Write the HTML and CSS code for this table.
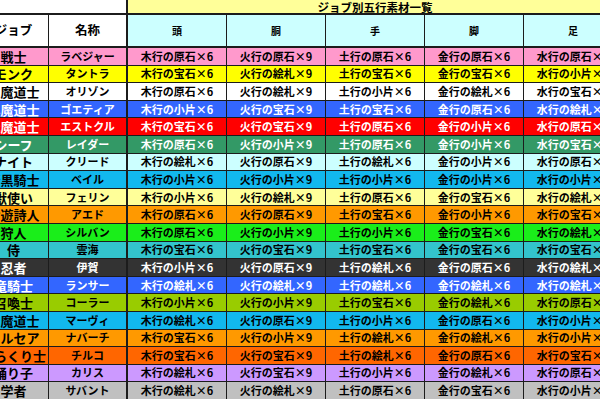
FILE: index.html
```html
<!DOCTYPE html>
<html lang="ja">
<head>
<meta charset="utf-8">
<title>ジョブ別五行素材一覧</title>
<link rel="stylesheet" href="styles.css">
</head>
<body>
<div class="sheet">
  <div class="grid">
    <div class="corner"></div>
    <div class="title first">ジョブ別五行素材一覧</div>

    <div class="hd hd-big">ジョブ</div>
    <div class="hd hd-big">名称</div>
    <div class="hd hd-part first">頭</div>
    <div class="hd hd-part">胴</div>
    <div class="hd hd-part">手</div>
    <div class="hd hd-part">脚</div>
    <div class="hd hd-part">足</div>

    <div class="row c-pink"><div class="job">戦士</div><div class="name">ラベジャー</div><div class="mat first">木行の原石×6</div><div class="mat">火行の原石×9</div><div class="mat">土行の原石×6</div><div class="mat">金行の原石×6</div><div class="mat">水行の原石×6</div></div>
    <div class="row c-yellow"><div class="job">モンク</div><div class="name">タントラ</div><div class="mat first">木行の宝石×6</div><div class="mat">火行の絵札×9</div><div class="mat">土行の宝石×6</div><div class="mat">金行の宝石×6</div><div class="mat">水行の小片×6</div></div>
    <div class="row c-white"><div class="job">白魔道士</div><div class="name">オリゾン</div><div class="mat first">木行の原石×6</div><div class="mat">火行の絵札×9</div><div class="mat">土行の小片×6</div><div class="mat">金行の絵札×6</div><div class="mat">水行の宝石×6</div></div>
    <div class="row c-blue"><div class="job">黒魔道士</div><div class="name">ゴエティア</div><div class="mat first">木行の小片×6</div><div class="mat">火行の宝石×9</div><div class="mat">土行の宝石×6</div><div class="mat">金行の原石×6</div><div class="mat">水行の絵札×6</div></div>
    <div class="row c-red"><div class="job">赤魔道士</div><div class="name">エストクル</div><div class="mat first">木行の宝石×6</div><div class="mat">火行の宝石×9</div><div class="mat">土行の原石×6</div><div class="mat">金行の小片×6</div><div class="mat">水行の原石×6</div></div>
    <div class="row c-seagreen"><div class="job">シーフ</div><div class="name">レイダー</div><div class="mat first">木行の原石×6</div><div class="mat">火行の小片×9</div><div class="mat">土行の原石×6</div><div class="mat">金行の小片×6</div><div class="mat">水行の宝石×6</div></div>
    <div class="row c-ice"><div class="job">ナイト</div><div class="name">クリード</div><div class="mat first">木行の絵札×6</div><div class="mat">火行の原石×9</div><div class="mat">土行の絵札×6</div><div class="mat">金行の小片×6</div><div class="mat">水行の原石×6</div></div>
    <div class="row c-sky"><div class="job">暗黒騎士</div><div class="name">ベイル</div><div class="mat first">木行の小片×6</div><div class="mat">火行の小片×9</div><div class="mat">土行の小片×6</div><div class="mat">金行の小片×6</div><div class="mat">水行の小片×6</div></div>
    <div class="row c-cream"><div class="job">獣使い</div><div class="name">フェリン</div><div class="mat first">木行の小片×6</div><div class="mat">火行の絵札×9</div><div class="mat">土行の原石×6</div><div class="mat">金行の宝石×6</div><div class="mat">水行の絵札×6</div></div>
    <div class="row c-orange"><div class="job">吟遊詩人</div><div class="name">アエド</div><div class="mat first">木行の原石×6</div><div class="mat">火行の原石×9</div><div class="mat">土行の宝石×6</div><div class="mat">金行の小片×6</div><div class="mat">水行の宝石×6</div></div>
    <div class="row c-green"><div class="job">狩人</div><div class="name">シルバン</div><div class="mat first">木行の原石×6</div><div class="mat">火行の小片×9</div><div class="mat">土行の小片×6</div><div class="mat">金行の宝石×6</div><div class="mat">水行の絵札×6</div></div>
    <div class="row c-teal"><div class="job">侍</div><div class="name">雲海</div><div class="mat first">木行の宝石×6</div><div class="mat">火行の宝石×9</div><div class="mat">土行の宝石×6</div><div class="mat">金行の宝石×6</div><div class="mat">水行の宝石×6</div></div>
    <div class="row c-dark"><div class="job">忍者</div><div class="name">伊賀</div><div class="mat first">木行の小片×6</div><div class="mat">火行の原石×9</div><div class="mat">土行の絵札×6</div><div class="mat">金行の原石×6</div><div class="mat">水行の絵札×6</div></div>
    <div class="row c-blue"><div class="job">竜騎士</div><div class="name">ランサー</div><div class="mat first">木行の絵札×6</div><div class="mat">火行の絵札×9</div><div class="mat">土行の絵札×6</div><div class="mat">金行の絵札×6</div><div class="mat">水行の絵札×6</div></div>
    <div class="row c-lime"><div class="job">召喚士</div><div class="name">コーラー</div><div class="mat first">木行の小片×6</div><div class="mat">火行の小片×9</div><div class="mat">土行の宝石×6</div><div class="mat">金行の絵札×6</div><div class="mat">水行の原石×6</div></div>
    <div class="row c-sky"><div class="job">青魔道士</div><div class="name">マーヴィ</div><div class="mat first">木行の絵札×6</div><div class="mat">火行の原石×9</div><div class="mat">土行の小片×6</div><div class="mat">金行の原石×6</div><div class="mat">水行の小片×6</div></div>
    <div class="row c-orange"><div class="job">コルセア</div><div class="name">ナバーチ</div><div class="mat first">木行の宝石×6</div><div class="mat">火行の小片×9</div><div class="mat">土行の絵札×6</div><div class="mat">金行の絵札×6</div><div class="mat">水行の小片×6</div></div>
    <div class="row c-tangerine"><div class="job">からくり士</div><div class="name">チルコ</div><div class="mat first">木行の宝石×6</div><div class="mat">火行の宝石×9</div><div class="mat">土行の絵札×6</div><div class="mat">金行の原石×6</div><div class="mat">水行の宝石×6</div></div>
    <div class="row c-lavender"><div class="job">踊り子</div><div class="name">カリス</div><div class="mat first">木行の絵札×6</div><div class="mat">火行の宝石×9</div><div class="mat">土行の小片×6</div><div class="mat">金行の絵札×6</div><div class="mat">水行の原石×6</div></div>
    <div class="row c-gray"><div class="job">学者</div><div class="name">サバント</div><div class="mat first">木行の絵札×6</div><div class="mat">火行の絵札×9</div><div class="mat">土行の原石×6</div><div class="mat">金行の宝石×6</div><div class="mat">水行の小片×6</div></div>
  </div>
</div>
</body>
</html>
```

FILE: styles.css
```css
html, body {
  margin: 0;
  padding: 0;
  background: #ffffff;
}

.sheet {
  width: 600px;
  height: 400px;
  overflow: hidden;
}

.grid {
  display: grid;
  grid-template-columns: 69px 77px 99px 98px 98px 98px 98px;
  grid-template-rows: 14px 32px;
  grid-auto-rows: 16.6px;
  gap: 1px;
  width: 643px;
  margin-left: -21px;
  background: #1c1c1c;
  font-family: "Noto Sans CJK JP", "Noto Sans", sans-serif;
  font-weight: 700;
  color: #000;
}

.row {
  display: contents;
  --bg: #ffffff;
  --fg: #000000;
}

.corner,
.title,
.hd,
.job,
.name,
.mat {
  display: flex;
  align-items: center;
  justify-content: center;
  box-sizing: border-box;
  white-space: nowrap;
  overflow: hidden;
  line-height: 1;
}

.corner {
  grid-column: 1 / span 2;
  background: #ffffff;
  border-bottom: 1px solid #1c1c1c;
}

.title {
  grid-column: 3 / span 5;
  background: #ffff99;
  border-bottom: 1px solid #1c1c1c;
  font-size: 11.5px;
  padding-top: 2px;
}

.hd {
  border-bottom: 1px solid #1c1c1c;
  background: #ffffff;
}

.hd-big {
  font-size: 12.5px;
}

.hd-part {
  background: #ccffff;
  font-size: 10px;
}

.first {
  border-left: 1px solid #1c1c1c;
}

.job,
.name,
.mat {
  background: var(--bg);
  color: var(--fg);
}

.job {
  font-size: 13px;
}

.name,
.mat {
  font-size: 11px;
}

.c-pink { --bg: #ff99cc; }
.c-yellow { --bg: #ffff00; }
.c-white { --bg: #ffffff; }
.c-blue { --bg: #3366ff; --fg: #ffffff; }
.c-red { --bg: #ff0000; --fg: #ffffff; }
.c-seagreen { --bg: #339966; --fg: #ffffff; }
.c-ice { --bg: #ccffff; }
.c-sky { --bg: #12b8ee; }
.c-cream { --bg: #ffff99; }
.c-orange { --bg: #ff9900; }
.c-green { --bg: #1aee1a; }
.c-teal { --bg: #33c4cc; }
.c-dark { --bg: #333333; --fg: #ffffff; }
.c-lime { --bg: #99cc00; }
.c-tangerine { --bg: #ff6600; }
.c-lavender { --bg: #cc99ff; }
.c-gray { --bg: #c0c0c0; }
```
